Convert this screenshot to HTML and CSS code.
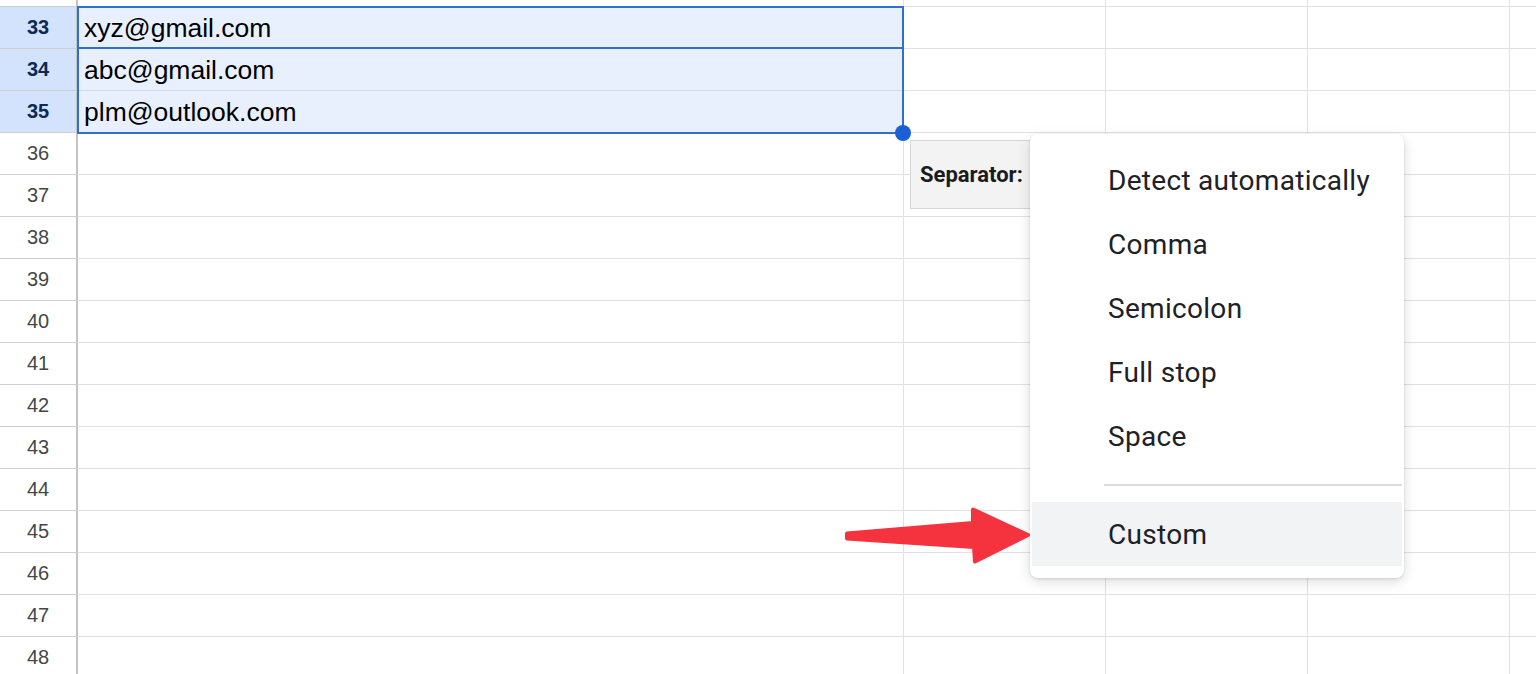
FILE: index.html
```html
<!DOCTYPE html>
<html>
<head>
<meta charset="utf-8">
<link rel="stylesheet" href="styles.css">
</head>
<body>
<div class="sheet">
  <div class="row partial"><div class="hdr"></div><div class="c a"></div><div class="c b"></div><div class="c b"></div><div class="c b"></div><div class="c e"></div></div>
  <div class="row sel"><div class="hdr">33</div><div class="c a">xyz@gmail.com</div><div class="c b"></div><div class="c b"></div><div class="c b"></div><div class="c e"></div></div>
  <div class="row sel"><div class="hdr">34</div><div class="c a">abc@gmail.com</div><div class="c b"></div><div class="c b"></div><div class="c b"></div><div class="c e"></div></div>
  <div class="row sel"><div class="hdr">35</div><div class="c a">plm@outlook.com</div><div class="c b"></div><div class="c b"></div><div class="c b"></div><div class="c e"></div></div>
  <div class="row"><div class="hdr">36</div><div class="c a"></div><div class="c b"></div><div class="c b"></div><div class="c b"></div><div class="c e"></div></div>
  <div class="row"><div class="hdr">37</div><div class="c a"></div><div class="c b"></div><div class="c b"></div><div class="c b"></div><div class="c e"></div></div>
  <div class="row"><div class="hdr">38</div><div class="c a"></div><div class="c b"></div><div class="c b"></div><div class="c b"></div><div class="c e"></div></div>
  <div class="row"><div class="hdr">39</div><div class="c a"></div><div class="c b"></div><div class="c b"></div><div class="c b"></div><div class="c e"></div></div>
  <div class="row"><div class="hdr">40</div><div class="c a"></div><div class="c b"></div><div class="c b"></div><div class="c b"></div><div class="c e"></div></div>
  <div class="row"><div class="hdr">41</div><div class="c a"></div><div class="c b"></div><div class="c b"></div><div class="c b"></div><div class="c e"></div></div>
  <div class="row"><div class="hdr">42</div><div class="c a"></div><div class="c b"></div><div class="c b"></div><div class="c b"></div><div class="c e"></div></div>
  <div class="row"><div class="hdr">43</div><div class="c a"></div><div class="c b"></div><div class="c b"></div><div class="c b"></div><div class="c e"></div></div>
  <div class="row"><div class="hdr">44</div><div class="c a"></div><div class="c b"></div><div class="c b"></div><div class="c b"></div><div class="c e"></div></div>
  <div class="row"><div class="hdr">45</div><div class="c a"></div><div class="c b"></div><div class="c b"></div><div class="c b"></div><div class="c e"></div></div>
  <div class="row"><div class="hdr">46</div><div class="c a"></div><div class="c b"></div><div class="c b"></div><div class="c b"></div><div class="c e"></div></div>
  <div class="row"><div class="hdr">47</div><div class="c a"></div><div class="c b"></div><div class="c b"></div><div class="c b"></div><div class="c e"></div></div>
  <div class="row"><div class="hdr">48</div><div class="c a"></div><div class="c b"></div><div class="c b"></div><div class="c b"></div><div class="c e"></div></div>

  <div class="sel-range"></div>
  <div class="sel-active"></div>
  <div class="handle"></div>

  <div class="sep-chip">Separator:</div>

  <div class="menu">
    <div class="item">Detect automatically</div>
    <div class="item">Comma</div>
    <div class="item">Semicolon</div>
    <div class="item">Full stop</div>
    <div class="item">Space</div>
    <div class="divider"></div>
    <div class="item hover">Custom</div>
  </div>

  <svg class="arrow" width="200" height="70" viewBox="840 500 200 70">
    <path d="M847 533.5 L973 523 L973 509.5 L1028 535 L975 561.5 L974 547 L847 538.5 Z" fill="#f4333f" stroke="#f4333f" stroke-width="4" stroke-linejoin="round"/>
  </svg>
</div>
</body>
</html>
```

FILE: styles.css
```css
html, body {
  margin: 0;
  padding: 0;
  background: #fff;
  overflow: hidden;
}

.sheet {
  position: relative;
  width: 1536px;
  height: 674px;
  overflow: hidden;
  display: flex;
  flex-direction: column;
  font-family: "Liberation Sans", Arial, sans-serif;
}

.row {
  display: flex;
  height: 42px;
  flex: none;
}

.row.partial {
  height: 7px;
}

.hdr {
  box-sizing: border-box;
  width: 78px;
  flex: none;
  border-right: 2px solid #c4c4c4;
  border-bottom: 1px solid #cfcfcf;
  display: flex;
  align-items: center;
  justify-content: center;
  font-size: 20px;
  color: #444746;
}

.c {
  box-sizing: border-box;
  border-right: 1px solid #e1e1e1;
  border-bottom: 1px solid #e1e1e1;
  flex: none;
  display: flex;
  align-items: center;
  font-size: 26.5px;
  color: #000;
  padding-left: 6px;
  padding-top: 2px;
  white-space: nowrap;
}

.c.a { width: 826px; }
.c.b { width: 202px; }
.c.e { flex: 1; border-right: none; }

.row.sel .hdr {
  background: #d3e3fd;
  color: #0b2a55;
  font-weight: bold;
}

.row.sel .c.a {
  background: #e8f0fe;
  border-bottom-color: #d3d9e4;
}

.sel-range {
  position: absolute;
  left: 77px;
  top: 6px;
  width: 827px;
  height: 128px;
  box-sizing: border-box;
  border: 2px solid #2f6fce;
}

.sel-active {
  position: absolute;
  left: 77px;
  top: 6px;
  width: 827px;
  height: 43px;
  box-sizing: border-box;
  border: 2px solid #2f6fce;
}

.handle {
  position: absolute;
  left: 895px;
  top: 125px;
  width: 16px;
  height: 16px;
  border-radius: 50%;
  background: #1a5fd6;
}

.sep-chip {
  position: absolute;
  left: 910px;
  top: 140px;
  width: 160px;
  height: 69px;
  box-sizing: border-box;
  border: 1px solid #d6d6d6;
  background: #f3f3f3;
  padding-left: 9px;
  display: flex;
  align-items: center;
  font-family: Roboto, "Noto Sans", sans-serif;
  font-weight: bold;
  font-size: 22px;
  color: #1b1b1b;
}

.menu {
  position: absolute;
  left: 1030px;
  top: 134px;
  width: 374px;
  box-sizing: border-box;
  padding: 14px 2px 12px;
  background: #fff;
  border-radius: 8px;
  box-shadow: 0 4px 14px rgba(0, 0, 0, 0.13), 0 1px 3px rgba(0, 0, 0, 0.12);
  font-family: Roboto, "Noto Sans", sans-serif;
}

.item {
  height: 64px;
  display: flex;
  align-items: center;
  padding-left: 76px;
  font-size: 28px;
  letter-spacing: 0.3px;
  color: #202124;
}

.item.hover {
  background: #f1f3f4;
}

.divider {
  height: 2px;
  background: #dadce0;
  margin: 16px 0 16px 72px;
}

.arrow {
  position: absolute;
  left: 840px;
  top: 500px;
}
```
